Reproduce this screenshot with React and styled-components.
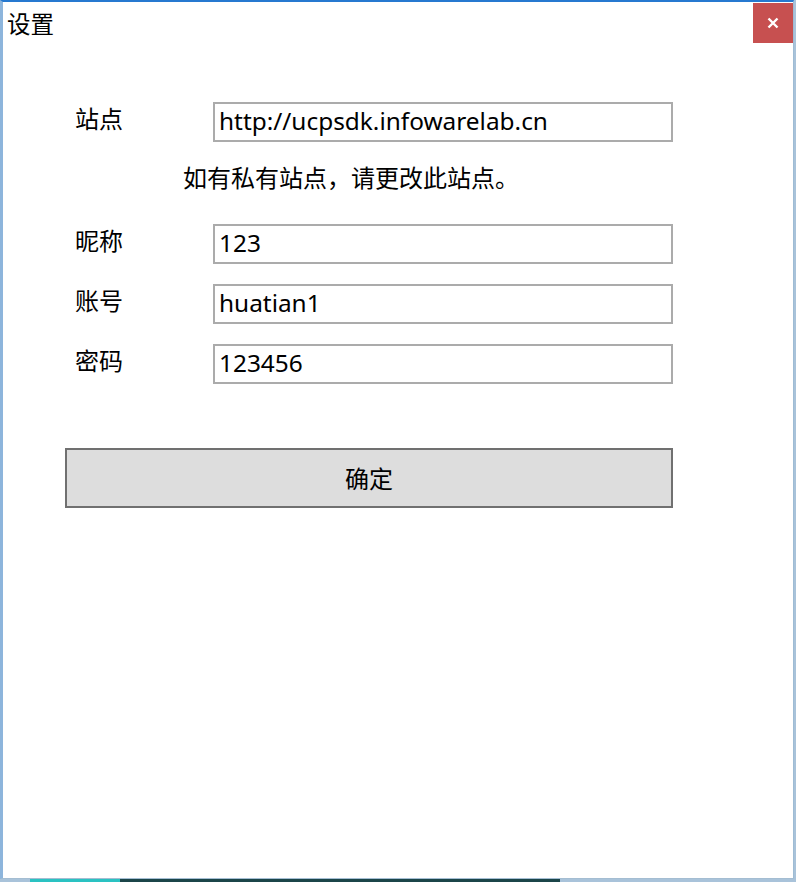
import React from "react";
import styled, { createGlobalStyle } from "styled-components";

const Global = createGlobalStyle`
  html, body {
    margin: 0;
    padding: 0;
    background: #1d4a4e;
  }
  body {
    width: 796px;
    height: 882px;
    overflow: hidden;
    background: linear-gradient(90deg, #a9c3da 0px, #a9c3da 30px, #2ac2c2 30px, #2ac2c2 120px, #1b4549 120px, #1b4549 560px, #a9c3da 560px);
  }
`;

const cjk = `"Noto Sans CJK SC", "Noto Sans", sans-serif`;
const latin = `"Noto Sans", "Noto Sans CJK SC", sans-serif`;

const Window = styled.div`
  box-sizing: border-box;
  width: 794px;
  height: 879px;
  background: #ffffff;
  border-top: 2px solid #2679d0;
  border-left: 3px solid #8db5dc;
  border-right: 1px solid #9fbcd4;
  border-bottom: 1px solid #a4bdd2;
  display: flex;
  flex-direction: column;
  font-family: ${cjk};
  color: #000;
`;

const TitleBar = styled.div`
  height: 44px;
  display: flex;
  align-items: flex-start;
`;

const Title = styled.div`
  padding: 5px 0 0 4px;
  font-size: 23.5px;
  line-height: 32px;
`;

const CloseButton = styled.button`
  margin: 1px 0 0 auto;
  width: 40px;
  height: 40px;
  border: none;
  padding: 0;
  background: #c75050;
  display: flex;
  align-items: center;
  justify-content: center;
  cursor: pointer;
`;

const Content = styled.div`
  padding: 56px 0 0 62px;
  display: flex;
  flex-direction: column;
`;

const Row = styled.div`
  display: flex;
  align-items: flex-start;
  margin-top: ${(p) => p.$gap || 0}px;
`;

const Label = styled.div`
  width: 138px;
  padding-left: 10px;
  font-size: 24px;
  line-height: 32px;
`;

const Field = styled.input`
  box-sizing: border-box;
  width: 460px;
  height: 40px;
  border: 2px solid #ababab;
  margin: 0;
  padding: 0 4px 4px 4px;
  font-family: ${latin};
  font-size: 24.4px;
  color: #000;
  background: #fff;
  outline: none;
`;

const Hint = styled.div`
  margin-top: 19px;
  padding-left: 118px;
  font-size: 24px;
  line-height: 32px;
`;

const Confirm = styled.button`
  box-sizing: border-box;
  margin-top: 64px;
  width: 608px;
  height: 60px;
  border: 2px solid #707070;
  background: #dddddd;
  font-family: ${cjk};
  font-size: 24px;
  color: #000;
  padding: 0 0 2px;
  cursor: pointer;
`;

export default function App() {
  return (
    <>
      <Global />
      <Window>
        <TitleBar>
          <Title>设置</Title>
          <CloseButton aria-label="close">
            <svg width="12" height="12" viewBox="0 0 12 12">
              <path d="M1.5 1.5 L10.5 10.5 M10.5 1.5 L1.5 10.5" stroke="#fff" strokeWidth="2.4" />
            </svg>
          </CloseButton>
        </TitleBar>
        <Content>
          <Row>
            <Label>站点</Label>
            <Field defaultValue="http://ucpsdk.infowarelab.cn" />
          </Row>
          <Hint>如有私有站点，请更改此站点。</Hint>
          <Row $gap={31}>
            <Label>昵称</Label>
            <Field defaultValue="123" />
          </Row>
          <Row $gap={20}>
            <Label>账号</Label>
            <Field defaultValue="huatian1" />
          </Row>
          <Row $gap={20}>
            <Label>密码</Label>
            <Field defaultValue="123456" />
          </Row>
          <Confirm>确定</Confirm>
        </Content>
      </Window>
    </>
  );
}
